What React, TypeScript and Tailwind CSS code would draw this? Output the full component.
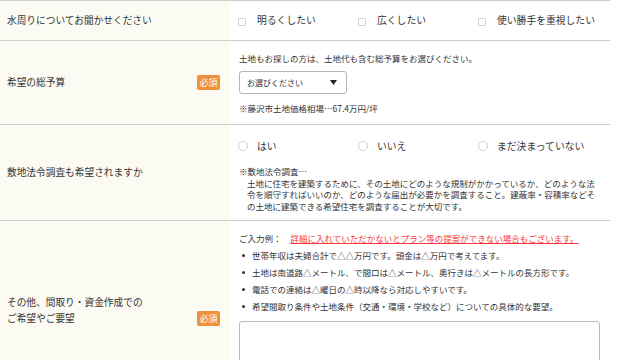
export default function App() {
  const bullets = [
    "世帯年収は夫婦合計で△△万円です。頭金は△万円で考えてます。",
    "土地は南道路△メートル、で間口は△メートル、奥行きは△メートルの長方形です。",
    "電話での連絡は△曜日の△時以降なら対応しやすいです。",
    "希望間取り条件や土地条件（交通・環境・学校など）についての具体的な要望。",
  ];
  const Badge = () => (
    <span className="flex h-[15px] w-[23px] items-center justify-center rounded-[2px] bg-[#f0913a] text-[9px] leading-none text-white">
      必須
    </span>
  );
  return (
    <div className="h-[360px] w-[636px] overflow-hidden bg-white font-['Noto_Sans_CJK_JP','Noto_Sans',sans-serif] text-[#333333]">
      <div className="w-[610px] border-t border-[#cccccc]">
        {/* Row 1 */}
        <div className="flex h-[40px] border-b border-[#cccccc]">
          <div className="flex w-[229px] items-center bg-[#fcfbf3] pl-[7px] text-[9.7px]">
            水周りについてお聞かせください
          </div>
          <div className="flex flex-1 items-center pl-[9px] text-[9.8px]">
            {["明るくしたい", "広くしたい", "使い勝手を重視したい"].map((t) => (
              <div key={t} className="flex w-[120px] items-center">
                <span className="mt-[2px] h-[8px] w-[8px] rounded-[1px] border border-[#cfcfcf] bg-white" />
                <span className="ml-[11px]">{t}</span>
              </div>
            ))}
          </div>
        </div>
        {/* Row 2 */}
        <div className="flex h-[84px] border-b border-[#cccccc]">
          <div className="flex w-[229px] items-center justify-between bg-[#fcfbf3] pl-[7px] pr-[9px] text-[9.7px]">
            <span>希望の総予算</span>
            <Badge />
          </div>
          <div className="flex flex-1 flex-col pl-[10px] pt-[11px] text-[8.5px]">
            <div className="leading-[12px]">土地もお探しの方は、土地代も含む総予算をお選びください。</div>
            <div className="mt-[7px] flex h-[23px] w-[108px] items-center justify-between rounded-[3px] border border-[#b5b5b5] bg-white pl-[7px] pr-[9px] text-[8px]">
              <span>お選びください</span>
              <svg width="7" height="5" viewBox="0 0 7 5">
                <path d="M0 0 L7 0 L3.5 5 Z" fill="#222" />
              </svg>
            </div>
            <div className="mt-[8px] leading-[12px]">※藤沢市土地価格相場…67.4万円/坪</div>
          </div>
        </div>
        {/* Row 3 */}
        <div className="flex h-[96px] border-b border-[#cccccc]">
          <div className="flex w-[229px] items-center bg-[#fcfbf3] pl-[7px] text-[9.7px]">
            敷地法令調査も希望されますか
          </div>
          <div className="flex flex-1 flex-col pl-[9px] pt-[11px]">
            <div className="flex h-[20px] items-center text-[9.8px]">
              {["はい", "いいえ", "まだ決まっていない"].map((t) => (
                <div key={t} className="flex w-[120px] items-center">
                  <span className="h-[10px] w-[10px] rounded-full border border-[#d0d0d0] bg-white" />
                  <span className="ml-[9px]">{t}</span>
                </div>
              ))}
            </div>
            <div className="mt-[10px] whitespace-nowrap pl-[1px] text-[8.5px] leading-[11.5px]">
              <div>※敷地法令調査…</div>
              <div className="pl-[8px]">土地に住宅を建築するために、その土地にどのような規制がかかっているか、どのような法</div>
              <div className="pl-[8px]">令を順守すればいいのか、どのような届出が必要かを調査すること。建蔽率・容積率などそ</div>
              <div className="pl-[8px]">の土地に建築できる希望住宅を調査することが大切です。</div>
            </div>
          </div>
        </div>
        {/* Row 4 */}
        <div className="flex h-[194px]">
          <div className="flex w-[229px] items-center justify-between bg-[#fcfbf3] pl-[7px] pr-[9px] text-[9.7px]">
            <span className="mb-[16px] leading-[16px]">
              その他、間取り・資金作成での
              <br />
              ご希望やご要望
            </span>
            <Badge />
          </div>
          <div className="flex flex-1 flex-col pl-[10px] pr-[10px] pt-[11px] text-[8.5px]">
            <div className="flex leading-[12px]">
              <span>ご入力例：</span>
              <span className="ml-[9px] text-[#f5383f] underline">
                詳細に入れていただかないとプラン等の提案ができない場合もございます。
              </span>
            </div>
            <ul className="mt-[3px]">
              {bullets.map((b) => (
                <li key={b} className="flex h-[17px] items-center">
                  <span className="ml-[3px] h-[3px] w-[3px] rounded-full bg-[#333]" />
                  <span className="ml-[7px]">{b}</span>
                </li>
              ))}
            </ul>
            <div className="mt-[6px] h-[83px] w-[361px] rounded-[3px] border border-[#bbbbbb] bg-white" />
          </div>
        </div>
      </div>
    </div>
  );
}
